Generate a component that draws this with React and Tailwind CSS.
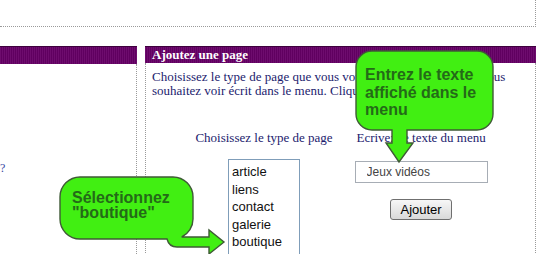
import React from "react";

const serif = { fontFamily: '"Liberation Serif", "Times New Roman", serif' };
const sans = { fontFamily: '"Liberation Sans", Arial, sans-serif' };

const bar =
  "h-[18px] border-t border-[#3e003e] bg-[repeating-linear-gradient(90deg,#6e0c6e_0px,#6e0c6e_1px,#600060_1px,#600060_2px)]";

function CalloutMenu() {
  return (
    <div className="absolute left-[350px] top-[45px] w-[150px] h-[125px]">
      <svg width="150" height="125" className="absolute left-0 top-0">
        <path
          d="M 22 6 H 127 A 16 16 0 0 1 143 22 V 69 A 16 16 0 0 1 127 85 H 57 V 98 H 63 L 49 117 L 36 98 H 42 V 85 H 22 A 16 16 0 0 1 6 69 V 22 A 16 16 0 0 1 22 6 Z"
          fill="#41ef12"
          stroke="#3f5a36"
          strokeWidth="1.4"
        />
      </svg>
      <div
        className="absolute left-[15px] top-[21px] text-[16px] leading-[17.5px] font-bold text-[#246a18]"
        style={sans}
      >
        Entrez le texte
        <br />
        affiché dans le
        <br />
        menu
      </div>
    </div>
  );
}

function CalloutBoutique() {
  return (
    <div className="absolute left-[55px] top-[170px] w-[180px] h-[84px]">
      <svg width="180" height="86" className="absolute left-0 top-0">
        <path
          d="M 25 7 H 118 A 20 20 0 0 1 138 27 V 49 A 20 20 0 0 1 126.7 67 H 154 V 60 L 169 72 L 154 84 V 77 H 122 Q 114 77 112 69 H 25 A 20 20 0 0 1 5 49 V 27 A 20 20 0 0 1 25 7 Z"
          fill="#41ef12"
          stroke="#3f5a36"
          strokeWidth="1.4"
        />
      </svg>
      <div
        className="absolute left-[17px] top-[20px] text-[16px] leading-[15px] font-bold text-[#246a18]"
        style={sans}
      >
        Sélectionnez
        <br />
        "boutique"
      </div>
    </div>
  );
}

export default function App() {
  const types = ["article", "liens", "contact", "galerie", "boutique"];

  return (
    <div className="relative w-[550px] h-[254px] overflow-hidden bg-white">
      {/* top strip */}
      <div className="h-[27px] w-[536px] border-b border-r border-dotted border-[#9a9a9a]" />

      <div className="mt-[19px] flex h-[208px]">
        {/* LEFT */}
        <div className="w-[137px] flex flex-col">
          <div className={bar} />
          <div className="flex-1 border-r border-dotted border-[#9a9a9a]">
            <div className="mt-[95px] text-[12px] text-[#3446a0]" style={serif}>
              ?
            </div>
          </div>
        </div>

        {/* RIGHT */}
        <div className="ml-[8px] w-[391px] flex flex-col">
          <div className={bar + " pl-[7px]"}>
            <span
              className="block text-[13px] leading-[16px] font-bold text-white"
              style={serif}
            >
              Ajoutez une page
            </span>
          </div>

          <div className="flex-1 border-l border-r border-dotted border-[#9a9a9a]">
            <p
              className="pl-[6px] pt-[7px] text-[13px] leading-[14px] text-[#1c1c6e]"
              style={serif}
            >
              Choisissez le type de page que vous voulez créer et le titre que vous
              <br />
              souhaitez voir écrit dans le menu. Cliquez ensuite sur "Ajouter"
            </p>

            <div className="mt-[32px] flex justify-center gap-[22px] pl-[2px]">
              <div className="flex flex-col items-center">
                <span
                  className="text-[13px] leading-[15px] text-[#1c1c6e]"
                  style={serif}
                >
                  Choisissez le type de page
                </span>
                <div
                  className="mt-[14px] w-[72px] h-[100px] border border-[#7f9db9] pl-[3px] pt-[3px] text-[13px] leading-[17.6px] text-[#111]"
                  style={sans}
                >
                  {types.map((t) => (
                    <div key={t}>{t}</div>
                  ))}
                </div>
              </div>

              <div className="flex flex-col items-center">
                <span
                  className="text-[13px] leading-[15px] text-[#1c1c6e]"
                  style={serif}
                >
                  Ecrivez le texte du menu
                </span>
                <input
                  readOnly
                  defaultValue="Jeux vidéos"
                  className="mt-[16px] w-[133px] h-[22px] border border-[#a7adb5] pl-[11px] text-[12px] text-[#444] outline-none"
                  style={sans}
                />
                <button
                  className="mt-[16px] w-[62px] h-[21px] rounded-[3px] border border-[#6f6f6f] bg-gradient-to-b from-[#f7f7f7] to-[#d9d9d9] text-[13px] text-black"
                  style={sans}
                >
                  Ajouter
                </button>
              </div>
            </div>
          </div>
        </div>
      </div>

      <CalloutMenu />
      <CalloutBoutique />
    </div>
  );
}
